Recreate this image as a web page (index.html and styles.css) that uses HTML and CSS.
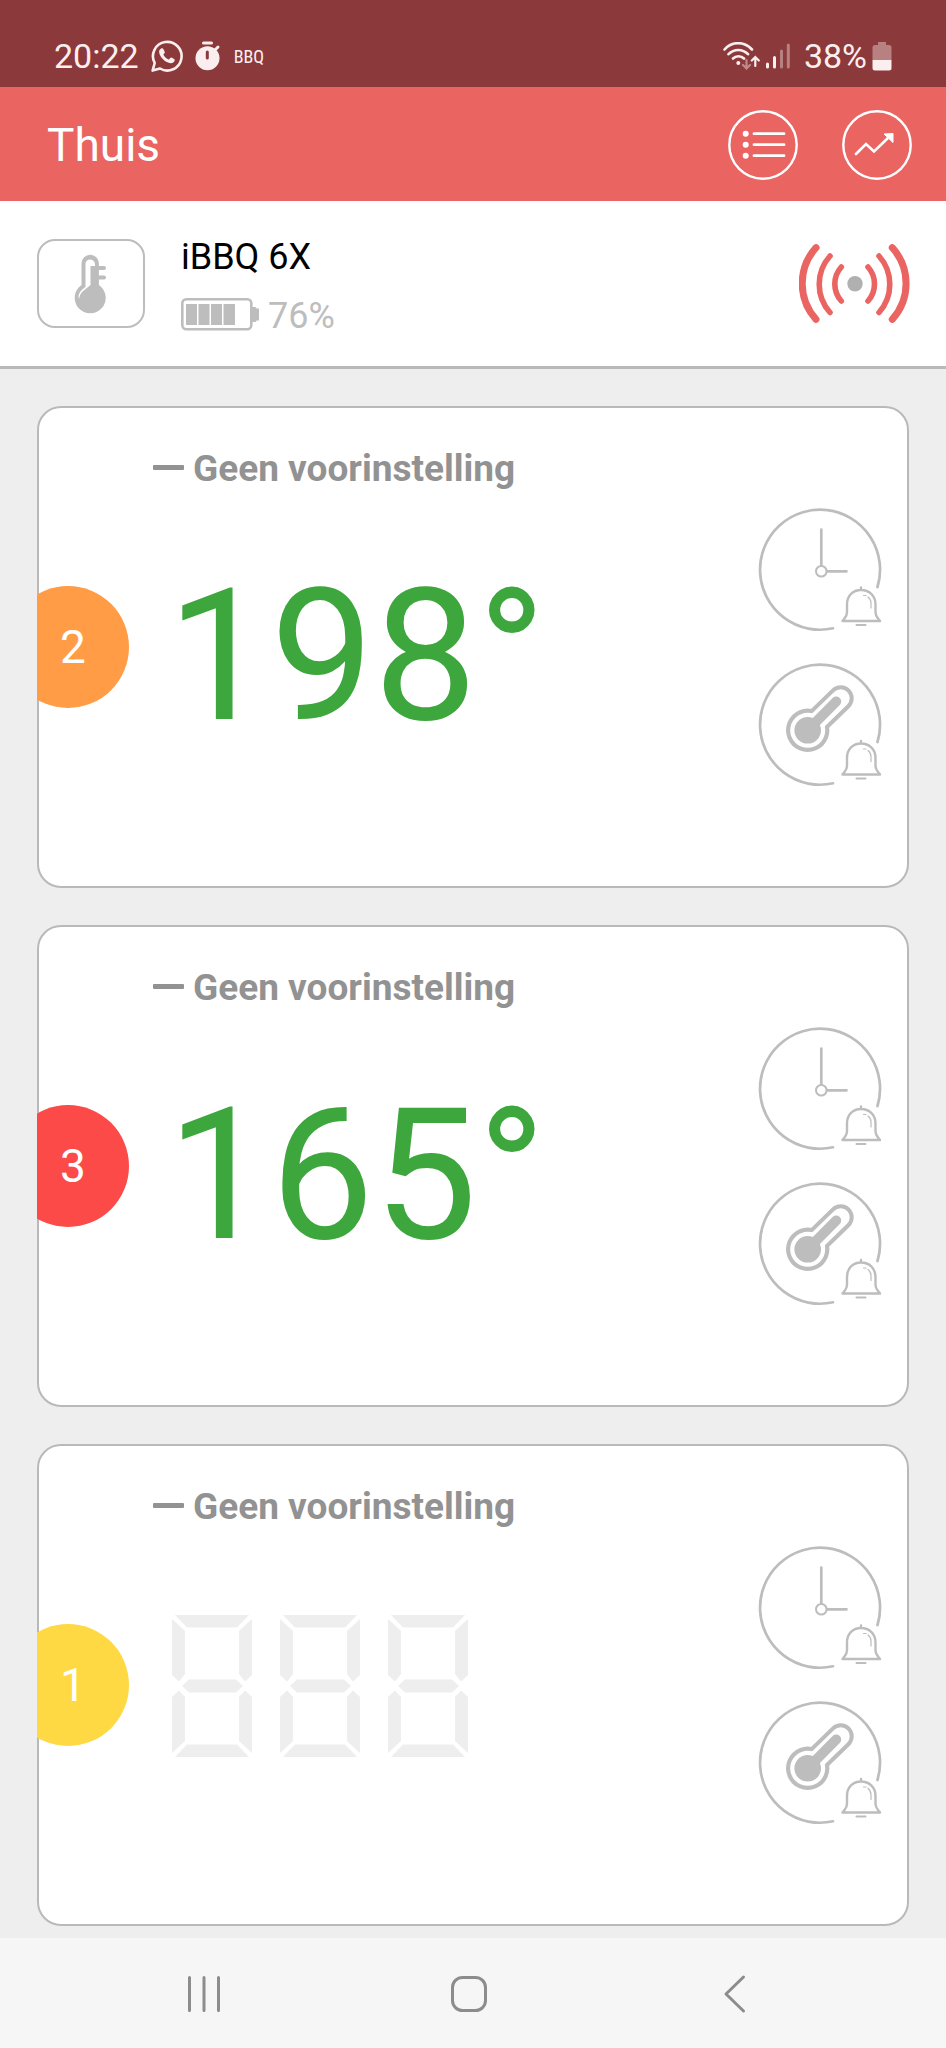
FILE: index.html
```
<!DOCTYPE html>
<html lang="nl">
<head>
    <meta charset="UTF-8">
    <meta name="viewport" content="width=device-width, initial-scale=1.0">
    <title>Thuis</title>
    <link rel="stylesheet" href="styles.css">
</head>
<body>
    <!-- Shared icons -->
    <svg class="sprite" aria-hidden="true">
        <symbol id="bell" viewBox="0 0 42 42">
            <g fill="none" stroke="currentColor" stroke-width="2.400" stroke-linecap="round" stroke-linejoin="round">
                <path d="M21 2v2M7 19C7 10 13 4.500 21 4.500S35.500 10 35.500 19v8c0 4 2 5 4.500 8.500H2.500C5 32 7 31 7 27z"/>
                <path d="M16.500 39.500h9" stroke-width="2"/>
                <path d="M23.500 10h2.500M28 11.500c2.500 2 3 4 3 6v5" stroke-width="1.200"/>
            </g>
        </symbol>
        <symbol id="timer-alarm" viewBox="0 0 124 124">
            <g fill="none" stroke="currentColor" stroke-width="2.700" stroke-linecap="round">
                <path d="M119.500 79A60 60 0 1 0 75 120.300"/>
                <circle cx="63.300" cy="63.300" r="5.300" stroke-width="2"/>
                <path d="M63.300 57.500V21.500M69 63.300H88.500"/>
            </g>
            <use href="#bell" x="82" y="77.500" width="42" height="42"/>
        </symbol>
        <symbol id="temp-alarm" viewBox="0 0 124 124">
            <path d="M119.500 79A60 60 0 1 0 75 120.300" fill="none" stroke="currentColor" stroke-width="2.700" stroke-linecap="round"/>
            <g fill="none" stroke-linecap="round">
                <path d="M49.700 67.300L82.700 35.300" stroke="currentColor" stroke-width="26"/>
                <circle cx="49.700" cy="67.300" r="21.700" fill="currentColor"/>
                <path d="M49.700 67.300L82.700 35.300" stroke="#fff" stroke-width="18"/>
                <circle cx="49.700" cy="67.300" r="17.500" fill="#fff"/>
                <path d="M49.700 67.300L78.200 38.500" stroke="currentColor" stroke-width="10"/>
                <circle cx="49.700" cy="67.300" r="13.300" fill="currentColor"/>
            </g>
            <use href="#bell" x="82" y="76" width="42" height="42"/>
        </symbol>
        <symbol id="segments" viewBox="0 0 80 142">
            <path d="M3 0H77L65 12.500H15zM0 4L13 16V59L7 66.500 0 60zM80 4L67 16V59L73 66.500 80 60zM17 64.500H64L71 71 64 77.500H17L10 71zM0 82L7 75.500 13 82V126L0 138zM80 82L73 75.500 67 82V126L80 138zM3 142H77L65 129.500H15z" fill="currentColor"/>
        </symbol>
    </svg>

    <!-- Status bar -->
    <div class="status-bar">
        <div class="status-left">
            <span class="status-text">20:22</span>
            <svg class="icon-chat" width="32" height="32" viewBox="0 0 32 32" aria-hidden="true">
                <path d="M1.600 30.600L3.700 23A14.300 14.300 0 1 1 9 28.500z" fill="none" stroke="currentColor" stroke-width="2.600" stroke-linejoin="round"/>
                <path d="M10.200 8.400c-1.600.6-2.300 2.200-2 4.200.8 5 6.300 10.300 11.500 10.700 2 .1 4-1.400 4.100-3.500 0-.5-3.400-2.400-4-2.200-.7.200-1.300 2-2 2-1.800-.3-5-3.400-5.300-4.800 0-.8 1.300-1.500 1.400-2.200.1-.6-1.500-4-2.100-4.200-.4-.2-1-.2-1.600 0z" fill="currentColor"/>
            </svg>
            <svg class="icon-timer" width="26" height="30" viewBox="0 0 26 30" aria-hidden="true">
                <circle cx="12.500" cy="17.300" r="12" fill="currentColor"/>
                <path d="M8.500 2h8M20 9l3-3" stroke="currentColor" stroke-width="3" stroke-linecap="round"/>
                <path d="M12.300 11v6" stroke="#8b393a" stroke-width="3" stroke-linecap="round"/>
            </svg>
            <span class="status-app">BBQ</span>
        </div>
        <div class="status-right">
            <svg width="37" height="28" viewBox="0 0 37 28" aria-hidden="true">
                <g fill="none" stroke="currentColor" stroke-width="2.600" stroke-linecap="round">
                    <path d="M1.500 7.500C9-1 21-1 29 7.500M5.500 12.200c5.500-5.600 14-5.600 19.500 0M10 16.500c3-3 8-3 11 0"/>
                    <path d="M32.300 24v-8M28.800 18.500l3.500-3.500 3.500 3.500" stroke-width="2.200"/>
                    <path d="M23.500 18v8M20 23l3.500 3.500L27 23" stroke-width="2.200" opacity=".45"/>
                </g>
                <circle cx="15.300" cy="21" r="2" fill="currentColor"/>
            </svg>
            <svg width="26" height="28" viewBox="0 0 26 28" aria-hidden="true">
                <g fill="none" stroke="currentColor" stroke-width="3" stroke-linecap="round">
                    <path d="M2.500 22v3M9.500 15.500v9.500"/>
                    <path d="M16.500 9v16M23.300 3v22" opacity=".4"/>
                </g>
            </svg>
            <span class="status-text status-percent">38%</span>
            <svg width="20" height="30" viewBox="0 0 20 30" aria-hidden="true">
                <path d="M6 1h8v3h3q2.500 0 2.500 2.500V19H.5V6.500Q.5 4 3 4h3z" fill="currentColor" opacity=".4"/>
                <path d="M.5 19h19v8q0 2.500-2.500 2.500H3Q.5 29.500.5 27z" fill="currentColor"/>
            </svg>
        </div>
    </div>

    <!-- Header -->
    <header class="header">
        <h1>Thuis</h1>
        <div class="header-actions">
            <button type="button" aria-label="Lijst">
                <svg width="70" height="70" viewBox="-35 -35 70 70">
                    <circle r="33.700" fill="none" stroke="currentColor" stroke-width="2.400"/>
                    <path d="M-9-11.300H21M-9-.3H21M-9 10.700H21" stroke="currentColor" stroke-width="2.800" stroke-linecap="round"/>
                    <g fill="currentColor">
                        <circle cx="-17.300" cy="-11.300" r="3"/>
                        <circle cx="-17.300" cy="-.3" r="3"/>
                        <circle cx="-17.300" cy="10.700" r="3"/>
                    </g>
                </svg>
            </button>
            <button type="button" aria-label="Grafiek">
                <svg width="70" height="70" viewBox="-35 -35 70 70">
                    <circle r="33.700" fill="none" stroke="currentColor" stroke-width="2.400"/>
                    <path d="M-21 9L-11-1-3 6.500 12-8" fill="none" stroke="currentColor" stroke-width="2.600" stroke-linecap="round"/>
                    <path d="M16-11.500V-2.500L7-11z" fill="currentColor" stroke="currentColor" stroke-linejoin="round"/>
                </svg>
            </button>
        </div>
    </header>

    <!-- Connected device -->
    <section class="device">
        <div class="device-icon">
            <svg width="34" height="60" viewBox="0 0 34 60" aria-hidden="true">
                <path d="M7.500 31V9.500a8.700 8.700 0 0 1 17.400 0V31a15.500 15.500 0 1 1-17.400 0z" fill="currentColor"/>
                <path d="M16.500 12V31L8 38a12 12 0 0 0-3 7c-1.200-4 .5-8 6.500-12V10c0-6 9-6 9.500 0v2z" fill="#fff"/>
                <path d="M24 14h6M24 23.500h6" stroke="currentColor" stroke-width="4" stroke-linecap="round"/>
            </svg>
        </div>
        <div class="device-info">
            <h2>iBBQ 6X</h2>
            <div class="battery">
                <svg width="78" height="33" viewBox="0 0 78 33" aria-hidden="true">
                    <rect x="1.300" y="1.300" width="69" height="30" rx="4" fill="none" stroke="currentColor" stroke-width="2.600"/>
                    <path d="M5 6h11v21H5zM17.500 6h11v21h-11zM30 6h11v21H30zM42.500 6h11.500v21H42.500zM71 9h3q1.500 0 1.500 1.500H78v12h-2.500q0 1.500-1.500 1.500h-3z" fill="currentColor"/>
                </svg>
                <span>76%</span>
            </div>
        </div>
        <svg class="device-signal" width="112" height="80" viewBox="0 0 112 80" role="img" aria-label="Verbonden">
            <g fill="none" stroke="currentColor" stroke-linecap="round">
                <path d="M17 3.700A53.400 53.400 0 0 0 17 75.300M93.300 3.700A53.400 53.400 0 0 1 93.300 75.300" stroke-width="7"/>
                <path d="M31 12A42.400 42.400 0 0 0 31 68.500M80 12A42.400 42.400 0 0 1 80 68.500" stroke-width="5.600"/>
                <path d="M42.300 23A25.500 25.500 0 0 0 42.300 57M69 23A25.500 25.500 0 0 1 69 57" stroke-width="5.600"/>
            </g>
            <circle cx="56" cy="39.700" r="7.700" fill="#b0b0b0"/>
        </svg>
    </section>

    <!-- Probes -->
    <main class="probes">
        <article class="card">
            <div class="badge orange">2</div>
            <div class="card-body">
                <h3 class="preset">Geen voorinstelling</h3>
                <p class="temperature">198°</p>
            </div>
            <div class="alarms">
                <button type="button" aria-label="Tijdalarm"><svg width="124" height="124"><use href="#timer-alarm"/></svg></button>
                <button type="button" aria-label="Temperatuuralarm"><svg width="124" height="124"><use href="#temp-alarm"/></svg></button>
            </div>
        </article>

        <article class="card">
            <div class="badge red">3</div>
            <div class="card-body">
                <h3 class="preset">Geen voorinstelling</h3>
                <p class="temperature">165°</p>
            </div>
            <div class="alarms">
                <button type="button" aria-label="Tijdalarm"><svg width="124" height="124"><use href="#timer-alarm"/></svg></button>
                <button type="button" aria-label="Temperatuuralarm"><svg width="124" height="124"><use href="#temp-alarm"/></svg></button>
            </div>
        </article>

        <article class="card">
            <div class="badge yellow">1</div>
            <div class="card-body">
                <h3 class="preset">Geen voorinstelling</h3>
                <div class="no-reading" role="img" aria-label="Geen meting">
                    <svg width="80" height="142"><use href="#segments"/></svg>
                    <svg width="80" height="142"><use href="#segments"/></svg>
                    <svg width="80" height="142"><use href="#segments"/></svg>
                </div>
            </div>
            <div class="alarms">
                <button type="button" aria-label="Tijdalarm"><svg width="124" height="124"><use href="#timer-alarm"/></svg></button>
                <button type="button" aria-label="Temperatuuralarm"><svg width="124" height="124"><use href="#temp-alarm"/></svg></button>
            </div>
        </article>
    </main>

    <!-- Android navigation -->
    <nav class="nav-bar">
        <button type="button" aria-label="Recent">
            <svg width="40" height="40" viewBox="0 0 40 40"><path d="M5.500 3.500v33M20 3.500v33M34.500 3.500v33" stroke="currentColor" stroke-width="3" stroke-linecap="round"/></svg>
        </button>
        <button type="button" aria-label="Home">
            <svg width="40" height="40" viewBox="0 0 40 40"><rect x="3.500" y="3.500" width="33" height="33" rx="10" fill="none" stroke="currentColor" stroke-width="3"/></svg>
        </button>
        <button type="button" aria-label="Terug">
            <svg width="40" height="40" viewBox="0 0 40 40"><path d="M29.500 3L12 20l17.500 17" fill="none" stroke="currentColor" stroke-width="3" stroke-linecap="round" stroke-linejoin="round"/></svg>
        </button>
    </nav>
</body>
</html>
```
FILE: styles.css
```
/* Base */
* {
    margin: 0;
    padding: 0;
    box-sizing: border-box;
}

body {
    display: flex;
    flex-direction: column;
    min-height: 100vh;
    font-family: Roboto, "Liberation Sans", sans-serif;
    background-color: #eee;
    color: #000;
}

svg {
    display: block;
    flex: none;
}

button {
    background: none;
    border: none;
    color: inherit;
    font: inherit;
    cursor: pointer;
}

.sprite {
    position: absolute;
    width: 0;
    height: 0;
}

/* Status bar */
.status-bar {
    display: flex;
    justify-content: space-between;
    padding: 36px 54px 11px;
    background-color: #8b393a;
    color: #fbeeee;
}

.status-left,
.status-right {
    display: flex;
    align-items: center;
}

.status-text {
    font-size: 34px;
    line-height: 40px;
}

.icon-chat {
    margin-left: 12px;
}

.icon-timer {
    margin-left: 12px;
}

.status-app {
    margin-left: 13px;
    font-family: "Roboto Condensed", Roboto, sans-serif;
    font-size: 18px;
}

.status-right {
    gap: 5px;
}

.status-percent {
    margin-left: 8px;
}

/* Header */
.header {
    display: flex;
    align-items: center;
    justify-content: space-between;
    padding: 23px 34px 21px 47px;
    background-color: #ea6461;
    color: #fff;
}

.header h1 {
    font-size: 46px;
    font-weight: 400;
    line-height: 56px;
}

.header-actions {
    display: flex;
    gap: 44px;
}

/* Device */
.device {
    display: flex;
    align-items: center;
    padding: 29px 35px 29px 37px;
    background-color: #fff;
    border-bottom: 3px solid #b9b9b9;
}

.device-icon {
    display: flex;
    align-items: center;
    justify-content: center;
    width: 108px;
    height: 89px;
    border: 2px solid #bdbdbd;
    border-radius: 18px;
    color: #bdbdbd;
}

.device-info {
    flex: 1;
    padding: 6px 0 0 36px;
}

.device-info h2 {
    font-size: 36px;
    font-weight: 400;
    line-height: 42px;
}

.battery {
    display: flex;
    align-items: center;
    gap: 9px;
    margin-top: 17px;
    color: #bdbdbd;
    font-size: 36px;
    line-height: 42px;
}

.battery svg {
    margin-bottom: 4px;
}

.device-signal {
    color: #ea6461;
}

/* Probe cards */
.probes {
    flex: 1;
    display: flex;
    flex-direction: column;
    gap: 37px;
    padding: 37px 37px 12px;
}

.card {
    display: flex;
    background-color: #fff;
    border: 2px solid #b9b9b9;
    border-radius: 24px;
}

.badge {
    align-self: center;
    width: 92px;
    margin-left: -2px;
    padding-right: 20px;
    font-size: 46px;
    line-height: 124px;
    text-align: center;
    color: #fff;
    clip-path: circle(61px at 31px 50%);
}

.orange {
    background-color: #ff9c45;
}

.red {
    background-color: #fb4a48;
}

.yellow {
    background-color: #ffd943;
}

.card-body {
    flex: 1;
    padding: 39px 0 0 24px;
}

.preset {
    display: flex;
    align-items: center;
    gap: 9px;
    font-size: 37px;
    font-weight: 700;
    line-height: 44px;
    color: #929292;
}

.preset::before {
    content: "";
    width: 31px;
    height: 5px;
    margin-bottom: 4px;
    border-radius: 1px;
    background-color: currentColor;
}

.temperature {
    margin-top: 73px;
    padding-left: 14px;
    font-size: 184px;
    line-height: 184px;
    color: #3da63d;
}

.no-reading {
    display: flex;
    gap: 28px;
    margin-top: 86px;
    padding-left: 19px;
    color: #eee;
}

.alarms {
    display: flex;
    flex-direction: column;
    gap: 31px;
    padding: 100px 25px 99px 0;
    color: #bdbdbd;
}

/* Android navigation */
.nav-bar {
    display: flex;
    justify-content: space-between;
    padding: 36px 192px 34px 184px;
    background-color: #f6f6f6;
    color: #8c8c8c;
}
```
